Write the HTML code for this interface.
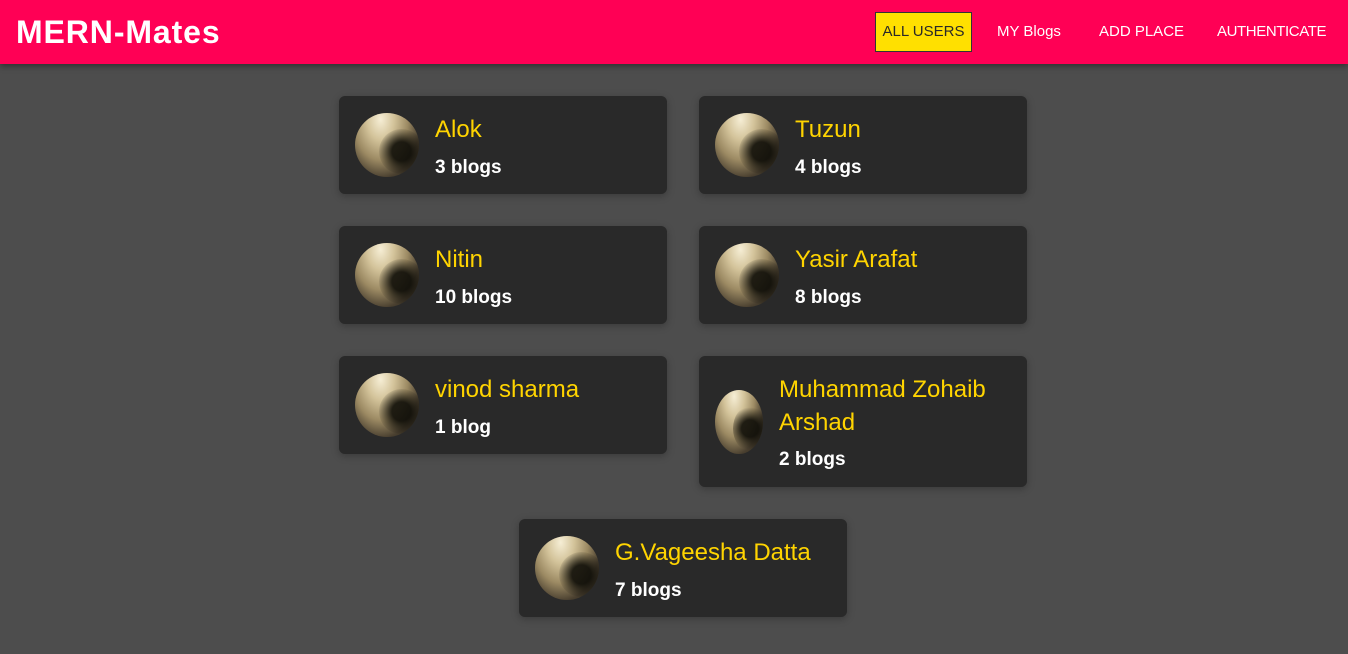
<!DOCTYPE html>
<html><head><meta charset="utf-8"><style>
*{margin:0;padding:0;box-sizing:border-box}
body{width:1348px;height:654px;background:#4d4d4d;font-family:"Liberation Sans",sans-serif;position:relative;overflow:hidden}
header{position:absolute;left:0;top:0;width:1348px;height:64px;background:#ff0055;box-shadow:0 2px 6px rgba(0,0,0,.4)}
.logo{position:absolute;left:16px;top:14px;color:#fff;font-weight:bold;font-size:32px;letter-spacing:.9px}
.nav{position:absolute;top:12px;height:40px;line-height:40px;color:#fff;font-size:15px;white-space:nowrap}
.active{background:#ffe000;color:#292929;border:1px solid #333;width:97px;text-align:center;line-height:38px}
.card{position:absolute;width:328px;background:#292929;border-radius:6px;box-shadow:0 2px 8px rgba(0,0,0,.26)}
.av{position:absolute;left:16px;width:64px;height:64px;border-radius:50%;overflow:hidden;
background:radial-gradient(ellipse at 40% 10%,#f6eed5 0%,#d3c39a 25%,#9c8a63 50%,#4a4030 72%,#1a1710 100%)}
.av::after{content:"";position:absolute;left:38%;top:25%;width:70%;height:70%;border-radius:50%;background:radial-gradient(circle at 50% 50%,rgba(15,14,8,.9) 30%,rgba(15,14,8,0) 75%)}
.nm{position:absolute;left:96px;color:#ffd400;font-size:24px;line-height:33px}
.bl{position:absolute;left:96px;color:#fff;font-weight:bold;font-size:19px;line-height:24px}
</style></head><body>
<header>
<div class="logo">MERN-Mates</div>
<div class="nav active" style="left:875px">ALL USERS</div>
<div class="nav" style="left:997px">MY Blogs</div>
<div class="nav" style="left:1099px">ADD PLACE</div>
<div class="nav" style="left:1217px;letter-spacing:-.4px">AUTHENTICATE</div>
</header>

<div class="card" style="left:339px;top:96px;height:98px"><div class="av" style="top:17px"></div><div class="nm" style="top:17px">Alok</div><div class="bl" style="top:60px">3 blogs</div></div>
<div class="card" style="left:699px;top:96px;height:98px"><div class="av" style="top:17px"></div><div class="nm" style="top:17px">Tuzun</div><div class="bl" style="top:60px">4 blogs</div></div>
<div class="card" style="left:339px;top:226px;height:98px"><div class="av" style="top:17px"></div><div class="nm" style="top:17px">Nitin</div><div class="bl" style="top:60px">10 blogs</div></div>
<div class="card" style="left:699px;top:226px;height:98px"><div class="av" style="top:17px"></div><div class="nm" style="top:17px">Yasir Arafat</div><div class="bl" style="top:60px">8 blogs</div></div>
<div class="card" style="left:339px;top:356px;height:98px"><div class="av" style="top:17px"></div><div class="nm" style="top:17px">vinod sharma</div><div class="bl" style="top:60px">1 blog</div></div>
<div class="card" style="left:699px;top:356px;height:131px"><div class="av" style="top:34px;width:48px"></div><div class="nm" style="top:17px;left:80px">Muhammad Zohaib<br>Arshad</div><div class="bl" style="top:92px;left:80px">2 blogs</div></div>
<div class="card" style="left:519px;top:519px;height:98px"><div class="av" style="top:17px"></div><div class="nm" style="top:17px">G.Vageesha Datta</div><div class="bl" style="top:60px">7 blogs</div></div>
</body></html>
